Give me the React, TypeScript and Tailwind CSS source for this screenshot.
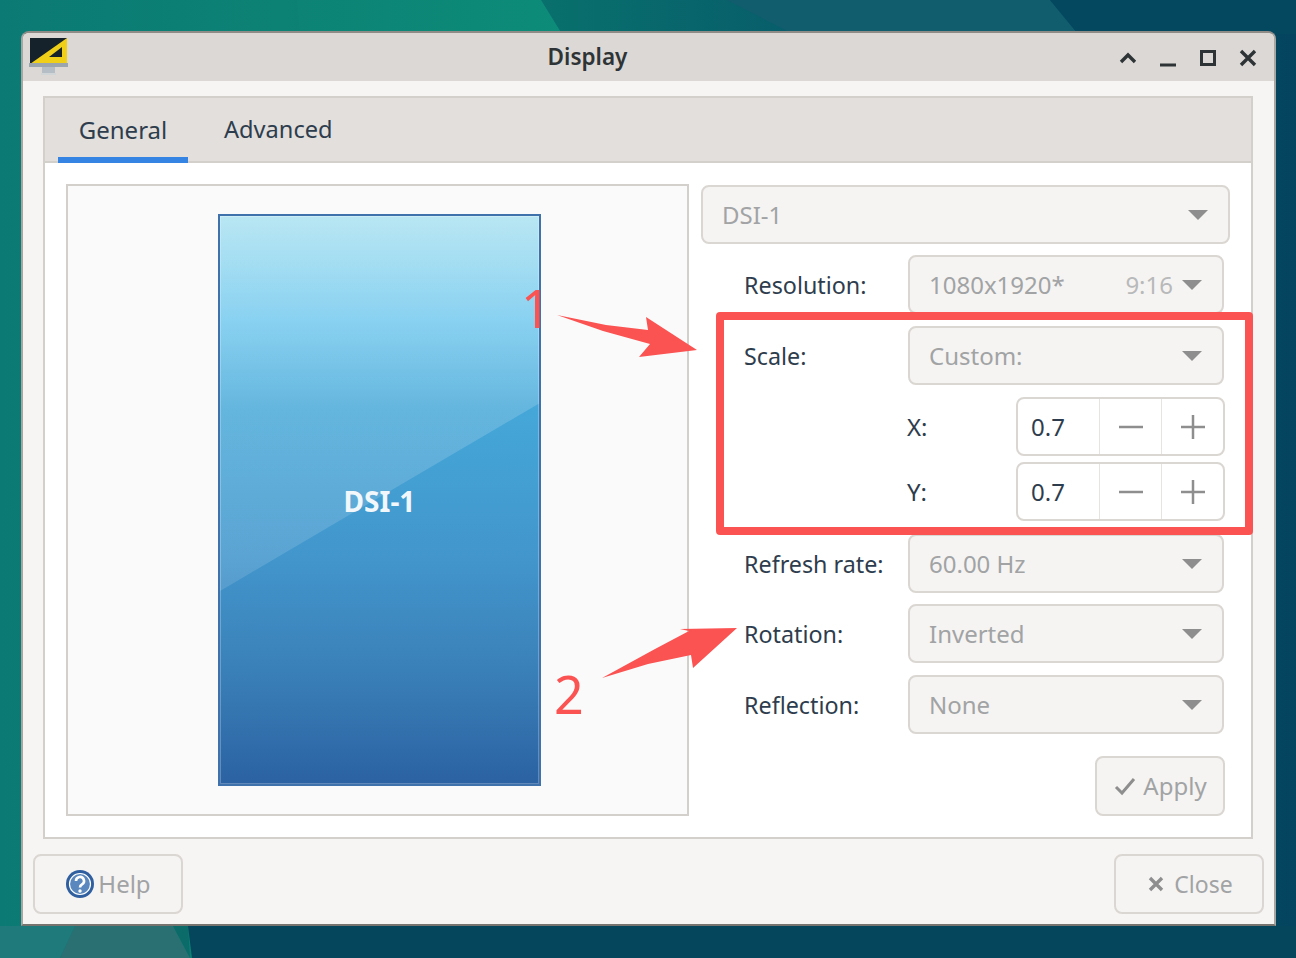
import { ReactNode } from 'react';

const FONT = 'font-["Noto_Sans",sans-serif]';

function Caret() {
    return (
        <svg width="22" height="12" viewBox="0 0 22 12" className="shrink-0">
            <path d="M1 1H21L11 11Z" fill="#8e8e8e" />
        </svg>
    );
}

function Combo({ value, extra, className }: { value: string; extra?: string; className: string }) {
    return (
        <div className={`flex h-[59px] items-center rounded-lg border-2 border-[#dad6d2] bg-[#f5f4f2] pl-[19px] pr-[19px] text-[24px] text-[#a1a3a5] ${className}`}>
            <span className="grow">{value}</span>
            {extra && <span className="mr-2 text-[#b8b9ba]">{extra}</span>}
            <Caret />
        </div>
    );
}

function Row({ label, value, extra, className }: { label: string; value: string; extra?: string; className: string }) {
    return (
        <div className={`flex items-center ${className}`}>
            <span className="w-[164px] pl-[43px] pt-[2px] text-[23.3px] text-[#2e3d4d] box-content">{label}</span>
            <Combo value={value} extra={extra} className="w-[316px]" />
        </div>
    );
}

function Spin({ label, className }: { label: string; className: string }) {
    return (
        <div className={`ml-[206px] flex items-center ${className}`}>
            <span className="w-[109px] text-[24px] text-[#2e3d4d]">{label}</span>
            <div className="flex h-[59px] w-[209px] items-stretch rounded-lg border-2 border-[#dad6d2] bg-white">
                <span className="flex w-[81px] items-center pl-[13px] text-[24px] text-[#2e3d4d]">0.7</span>
                <span className="flex w-[62px] items-center justify-center border-l border-[#e6e3e0]">
                    <svg width="26" height="26" viewBox="0 0 26 26"><path d="M1 13H25" stroke="#8e8e8e" strokeWidth="2.5" /></svg>
                </span>
                <span className="flex grow items-center justify-center border-l border-[#e6e3e0]">
                    <svg width="26" height="26" viewBox="0 0 26 26"><path d="M1 13H25M13 1V25" stroke="#8e8e8e" strokeWidth="2.5" /></svg>
                </span>
            </div>
        </div>
    );
}

function Btn({ children, className }: { children: ReactNode; className: string }) {
    return (
        <div className={`flex h-[60px] items-center justify-center rounded-lg border-2 border-[#dad6d2] bg-[#f5f4f2] text-[24px] text-[#a1a3a5] ${className}`}>
            {children}
        </div>
    );
}

function Wallpaper() {
    return (
        <svg className="absolute inset-0" width="1296" height="958" viewBox="0 0 1296 958" preserveAspectRatio="none">
            <defs>
                <linearGradient id="wp" x1="0" y1="0" x2="1" y2="0">
                    <stop offset="0" stopColor="#0b7a74" />
                    <stop offset="0.22" stopColor="#0c8274" />
                    <stop offset="0.44" stopColor="#086e6c" />
                    <stop offset="0.7" stopColor="#07556a" />
                    <stop offset="1" stopColor="#04445e" />
                </linearGradient>
                <linearGradient id="band" x1="0" y1="0" x2="1" y2="0">
                    <stop offset="0" stopColor="#0c8375" />
                    <stop offset="1" stopColor="#0d8c79" />
                </linearGradient>
            </defs>
            <rect width="1296" height="958" fill="url(#wp)" />
            <polygon points="297,0 541,0 562,34 300,34" fill="url(#band)" />
            <polygon points="727,0 1050,0 1078,34 793,34" fill="#115d6e" />
            <polygon points="1050,0 1296,0 1296,34 1078,34" fill="#04485f" />
            <polygon points="0,926 75,926 60,958 0,958" fill="#1f7a7b" />
            <polygon points="75,926 173,926 190,958 60,958" fill="#2a7073" />
            <polygon points="173,926 188,926 190,958" fill="#0a6b68" />
            <polygon points="188,926 1296,926 1296,958 192,958" fill="#05465c" />
        </svg>
    );
}

function WindowIcon() {
    return (
        <svg width="42" height="42" viewBox="0 0 42 42" className="absolute left-[5px] top-[2px]">
            <rect x="2" y="3" width="37" height="26" fill="#15222c" />
            <polygon points="2,29 39,3 39,29" fill="#f0cf18" />
            <polygon points="21,22 34,22 34,12" fill="#15222c" />
            <rect x="1" y="28" width="39" height="4" fill="#9aa5ad" />
            <rect x="14" y="32" width="13" height="7" fill="#b5bec4" />
            <rect x="13" y="38" width="15" height="2" fill="#d0d5d8" />
        </svg>
    );
}

function Annotations() {
    return (
        <>
            <div className="absolute left-[716px] top-[312px] h-[223px] w-[537px] rounded-sm border-[8px] border-[#fb5252]" />
            <svg className="absolute left-0 top-0" width="1296" height="958" viewBox="0 0 1296 958">
                <polygon points="557,315 606,325 648,330 646,317 697,350 639,357 650,344 603,331" fill="#fb5252" />
                <polygon points="602,678 655,649 689,631 680,629 737,628 693,668 691,655 648,664" fill="#fb5252" />
            </svg>
            <span className="absolute left-[521px] top-[274px] text-[52px] leading-[68px] text-[#fb5252]">1</span>
            <span className="absolute left-[554px] top-[660px] text-[52px] leading-[68px] text-[#fb5252]">2</span>
        </>
    );
}

export default function App() {
    return (
        <div className={`relative h-[958px] w-[1296px] overflow-hidden pl-[21px] pt-[31px] ${FONT}`}>
            <Wallpaper />
            <div className="relative h-[895px] w-[1255px] overflow-hidden rounded-t-lg border-2 border-t-[#8f8c88] border-x-[#a9a6a2] border-b-[#77746f] bg-[#f6f5f4]">
                <div className="relative flex h-[48px] items-center justify-center bg-[#dbd8d5] pr-[122px] font-semibold text-[#2e3436]">
                    <WindowIcon />
                    <span className="text-[22.5px]">Display</span>
                    <div className="absolute right-[17px] top-[16px] flex items-center gap-[22px]">
                        <svg width="18" height="18" viewBox="0 0 18 18"><path d="M2 13L9 6L16 13" fill="none" stroke="#2e3436" strokeWidth="3.4" /></svg>
                        <svg width="18" height="18" viewBox="0 0 18 18"><path d="M1 16H17" fill="none" stroke="#2e3436" strokeWidth="3" /></svg>
                        <svg width="18" height="18" viewBox="0 0 18 18"><rect x="2.5" y="2.5" width="13" height="13" fill="none" stroke="#2e3436" strokeWidth="3" /></svg>
                        <svg width="18" height="18" viewBox="0 0 18 18"><path d="M2 2L16 16M16 2L2 16" fill="none" stroke="#2e3436" strokeWidth="3.4" /></svg>
                    </div>
                </div>
                <div className="mx-5 mt-[15px] h-[743px] w-[1210px] border-2 border-[#d3cfca] bg-white">
                    <div className="flex h-[65px] items-stretch border-b-2 border-[#d3cfca] bg-[#e2dfdc] pl-[13px] text-[24px] text-[#2e3d4d]">
                        <div className="flex h-[65px] w-[130px] items-center justify-center border-b-[6px] border-[#3584e4] pt-1">General</div>
                        <div className="ml-9 flex items-center text-[23.6px]">Advanced</div>
                    </div>
                    <div className="flex pl-[21px] pt-[21px]">
                        <div className="flex h-[632px] w-[623px] shrink-0 justify-center border-2 border-[#d3cfca] bg-[#fafafa] pl-[4px] pt-[28px]">
                            <div className="relative flex h-[572px] w-[323px] items-center justify-center overflow-hidden border-2 border-[#3f72ab] bg-[linear-gradient(#a5e0f0,#6ec7ee_18%,#45a7d8_34%,#4296cc_60%,#3a80b8_80%,#2b62a2)] shadow-[inset_0_0_0_1px_rgba(255,255,255,0.25)]">
                                <svg className="absolute inset-0 h-full w-full" viewBox="0 0 100 100" preserveAspectRatio="none">
                                    <defs>
                                        <linearGradient id="gloss" x1="0" y1="0" x2="0" y2="1">
                                            <stop offset="0" stopColor="#ffffff" stopOpacity="0.22" />
                                            <stop offset="1" stopColor="#ffffff" stopOpacity="0.12" />
                                        </linearGradient>
                                    </defs>
                                    <polygon points="0,66 100,33 100,0 0,0" fill="url(#gloss)" />
                                </svg>
                                <span className="relative mt-[1px] text-[28px] font-bold text-[#f2f7fb]">DSI-1</span>
                            </div>
                        </div>
                        <div className="ml-[12px] w-[529px] pt-px">
                            <Combo value="DSI-1" className="" />
                            <Row label="Resolution:" value="1080x1920*" extra="9:16" className="mt-[11px]" />
                            <Row label="Scale:" value="Custom:" className="mt-[12px]" />
                            <Spin label="X:" className="mt-[12px]" />
                            <Spin label="Y:" className="mt-[6px]" />
                            <Row label="Refresh rate:" value="60.00 Hz" className="mt-[13px]" />
                            <Row label="Rotation:" value="Inverted" className="mt-[11px]" />
                            <Row label="Reflection:" value="None" className="mt-[12px]" />
                            <Btn className="ml-[394px] mt-[22px] w-[130px] gap-[6px]">
                                <svg width="24" height="20" viewBox="0 0 24 20"><path d="M3 11L9 17L21 3" fill="none" stroke="#8e8e8e" strokeWidth="3" /></svg>
                                Apply
                            </Btn>
                        </div>
                    </div>
                </div>
                <div className="mt-[15px] flex justify-between px-[10px]">
                    <Btn className="w-[150px] gap-[3px]">
                        <svg width="30" height="30" viewBox="0 0 30 30">
                            <circle cx="15" cy="15" r="14" fill="#2f5f9f" />
                            <circle cx="15" cy="15" r="10.5" fill="#5a87bd" stroke="#ffffff" strokeWidth="1.2" />
                            <path d="M11 12a4 4 0 1 1 6 3.4c-1.3.8-2 1.4-2 3" fill="none" stroke="#ffffff" strokeWidth="2.6" />
                            <circle cx="15" cy="22" r="1.7" fill="#ffffff" />
                        </svg>
                        Help
                    </Btn>
                    <Btn className="w-[150px] gap-[9px] pl-[2px]">
                        <svg width="18" height="18" viewBox="0 0 18 18"><path d="M3 3L15 15M15 3L3 15" fill="none" stroke="#8e8e8e" strokeWidth="3.4" /></svg>
                        <span className="text-[23px]">Close</span>
                    </Btn>
                </div>
            </div>
            <Annotations />
        </div>
    );
}
